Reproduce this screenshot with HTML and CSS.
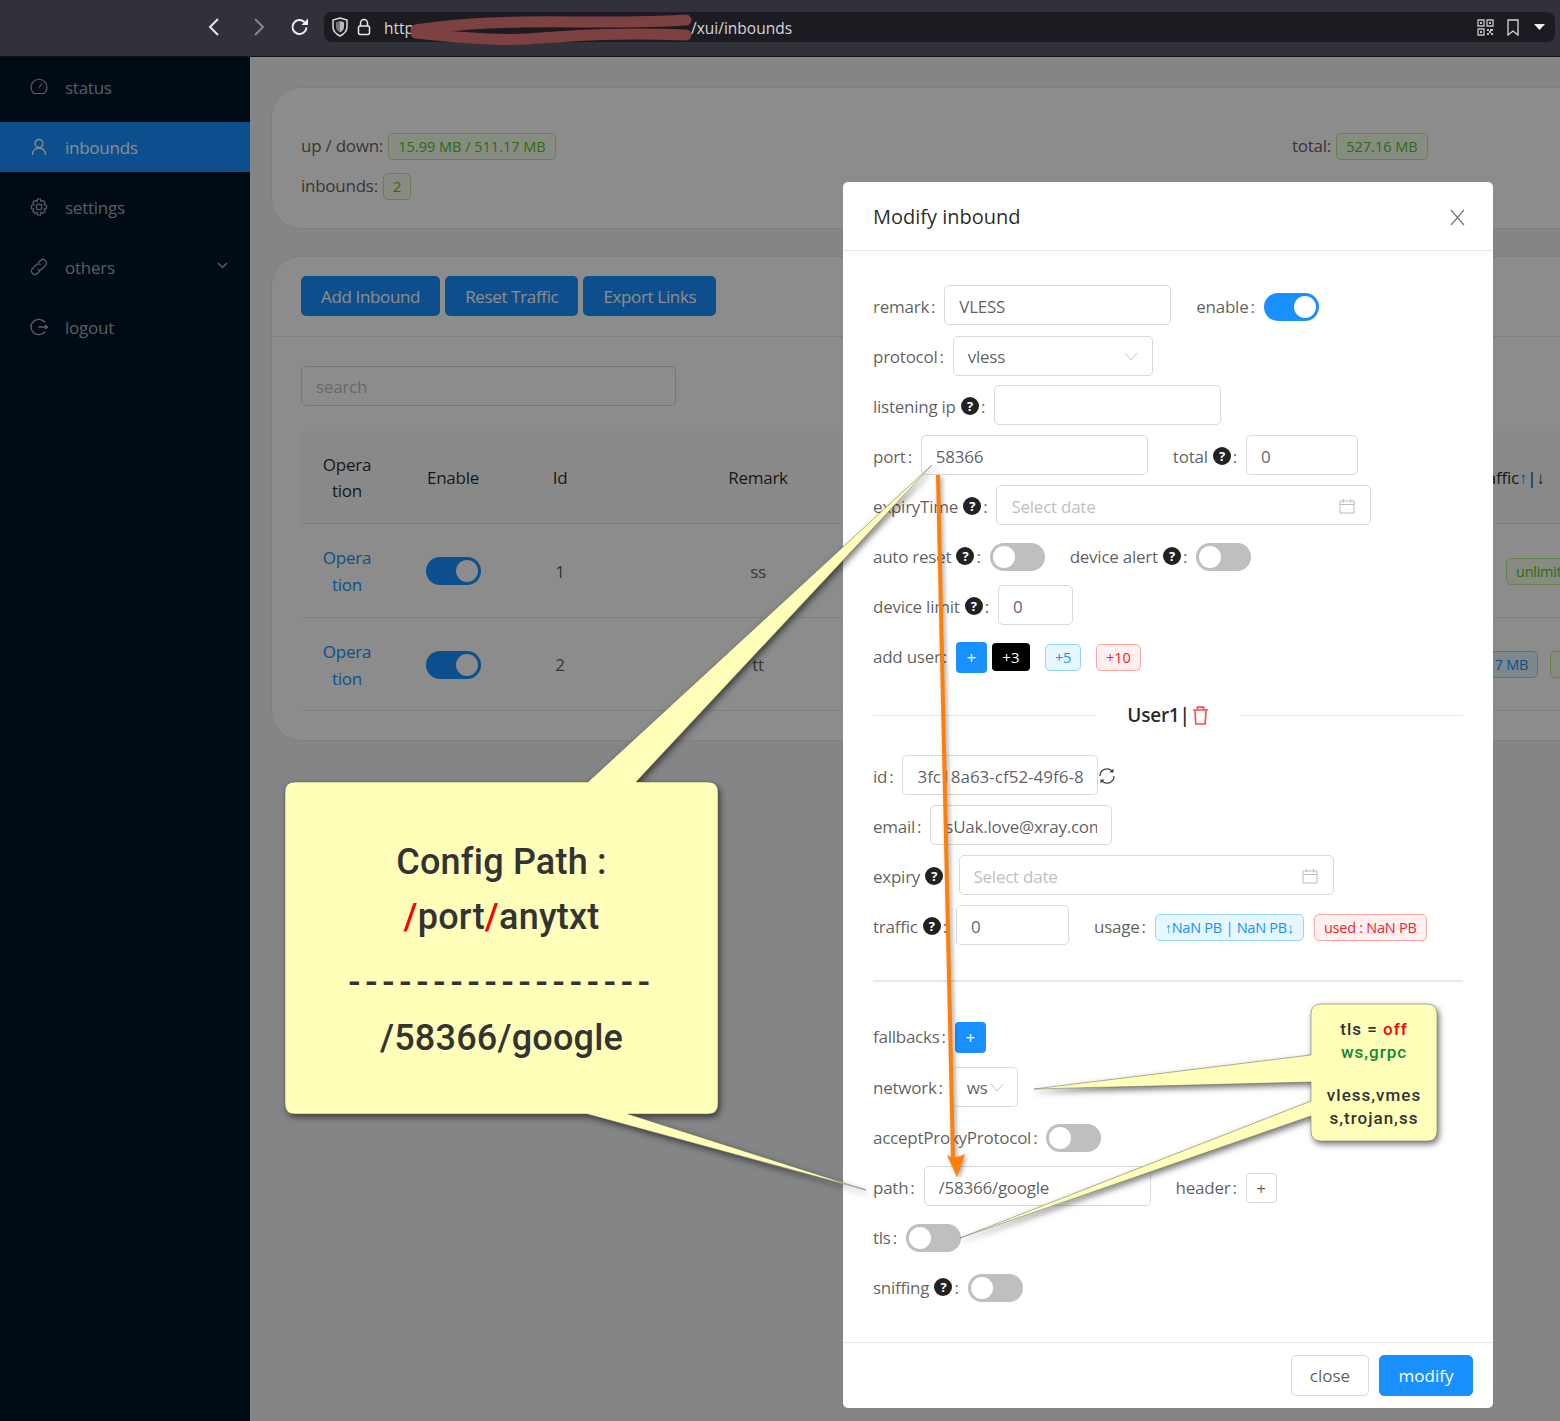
FILE: index.html
```html
<!DOCTYPE html>
<html lang="en">
<head>
  <meta charset="UTF-8" />
  <title>Modify inbound</title>
  <link rel="stylesheet" href="styles.css">
</head>
<body>

<svg class="defs" width="0" height="0">
  <symbol id="icoCal" viewBox="0 0 16 16"><path d="M1 3h14v12H1zM1 6.500h14M4.500 1v3.500M11.500 1v3.500" fill="none" stroke="#bdbdbd" stroke-width="1"/></symbol>
  <symbol id="icoDown" viewBox="0 0 16 10"><path d="M1 1l7 8 7-8" fill="none" stroke="#bfbfbf" stroke-width="1.100"/></symbol>
</svg>

<div class="browserbar">
  <svg class="nav-ico back" width="14" height="20" viewBox="0 0 14 20"><path d="M11 2L3 10l8 8" fill="none" stroke="#e8e8ea" stroke-width="2"/></svg>
  <svg class="nav-ico fwd" width="14" height="20" viewBox="0 0 14 20"><path d="M3 2l8 8-8 8" fill="none" stroke="#85858c" stroke-width="2"/></svg>
  <svg class="nav-ico reload" width="20" height="20" viewBox="0 0 20 20"><path d="M16.500 10.500a7 7 0 1 1-2.200-5.600" fill="none" stroke="#f0f0f2" stroke-width="2"/><path d="M18 1.500v6.600h-6.600z" fill="#f0f0f2"/></svg>
  <div class="urlbar">
    <svg width="16" height="20" viewBox="0 0 16 20"><path d="M8 1l7 2v7c0 4-3 7-7 9-4-2-7-5-7-9V3z" fill="none" stroke="#d8d8da" stroke-width="1.500"/><path d="M8 4l4 1.200V10c0 2.500-2 4.500-4 5.500z" fill="#b8b8bc"/><path d="M8 4L4 5.200V10c0 2.500 2 4.500 4 5.500z" fill="#77777c"/></svg>
    <svg class="lock" width="14" height="18" viewBox="0 0 14 18"><path d="M3.500 8V5a3.500 3.500 0 0 1 7 0v3" fill="none" stroke="#e8e8ea" stroke-width="1.500"/><rect x="1.500" y="8" width="11" height="8.500" rx="1.500" fill="none" stroke="#e8e8ea" stroke-width="1.500"/></svg>
    <span class="url-start">http</span>
    <span class="url-end">/xui/inbounds</span>
    <svg class="qr" width="17" height="17" viewBox="0 0 17 17"><path d="M1 1h6v6H1zM10 1h6v6h-6zM1 10h6v6H1z" fill="none" stroke="#c4c4c8" stroke-width="1.300"/><path d="M3 3h2v2H3zM12 3h2v2h-2zM3 12h2v2H3zM10 10h2v2h-2zM13 10h3v2h-3zM12 12h2v2h-2zM10 14h2v2h-2zM14 14h2v2h-2z" fill="#c4c4c8"/></svg>
    <svg class="mark" width="12" height="17" viewBox="0 0 12 17"><path d="M1 1h10v15l-5-4-5 4z" fill="none" stroke="#d8d8da" stroke-width="1.300"/></svg>
    <svg class="caret" width="11" height="6" viewBox="0 0 11 6"><path d="M0 0h11L5.500 6z" fill="#f0f0f2"/></svg>
  </div>
  <svg class="scribble" width="290" height="34" viewBox="0 0 290 34"><path d="M8 17C34 13 64 10 114 9S214 11 278 7M8 20C44 24 84 28 119 26S194 19 278 22" fill="none" stroke="#7e4141" stroke-width="11" stroke-linecap="round"/></svg>
</div>

<div class="layout">
  <aside class="sidebar">
    <a class="menu-item">
      <svg width="18" height="18" viewBox="0 0 18 18"><path d="M4 15.500a8 8 0 1 1 10 0zM9 9.500l3-4" fill="none" stroke="currentColor" stroke-width="1.200"/></svg>
      status
    </a>
    <a class="menu-item active">
      <svg width="18" height="18" viewBox="0 0 18 18"><circle cx="9" cy="5.500" r="4" fill="none" stroke="currentColor" stroke-width="1.400"/><path d="M2.500 17c0-4 2.500-7 6.500-7s6.500 3 6.500 7" fill="none" stroke="currentColor" stroke-width="1.400"/></svg>
      inbounds
    </a>
    <a class="menu-item">
      <svg width="18" height="18" viewBox="0 0 18 18"><path d="M7.500 1h3l.5 2.500 2-1 2.200 2.200-1.200 2 2.500.8v3l-2.500.6 1.200 2.200-2.200 2.200-2-1.200-.5 2.700h-3L7 14.300l-2 1.200-2.200-2.200 1.200-2.200L1.500 10.500v-3L4 6.700l-1.200-2L5 2.500l2 1z" fill="none" stroke="currentColor" stroke-width="1.200"/><circle cx="9" cy="9" r="2.800" fill="none" stroke="currentColor" stroke-width="1.200"/></svg>
      settings
    </a>
    <a class="menu-item">
      <svg width="18" height="18" viewBox="0 0 18 18"><path d="M8 5l2.500-2.500a3.300 3.300 0 0 1 5 5L12 11a3.300 3.300 0 0 1-4.500.2M10 13l-2.500 2.500a3.300 3.300 0 0 1-5-5L6 7a3.300 3.300 0 0 1 4.500-.2" fill="none" stroke="currentColor" stroke-width="1.200"/></svg>
      others
      <svg class="menu-arrow" width="11" height="7" viewBox="0 0 11 7"><path d="M1 1l4.500 4.500L10 1" fill="none" stroke="currentColor" stroke-width="1.500"/></svg>
    </a>
    <a class="menu-item">
      <svg width="18" height="18" viewBox="0 0 18 18"><path d="M15 4.500a7.700 7.700 0 1 0 0 9M8.500 9h9M15 7l2.500 2-2.500 2" fill="none" stroke="currentColor" stroke-width="1.300"/></svg>
      logout
    </a>
  </aside>

  <main class="content">
    <section class="card stats">
      <div class="stat">up / down: <span class="tag green">15.99 MB / 511.17 MB</span></div>
      <div class="stat">total: <span class="tag green">527.16 MB</span></div>
      <div class="stat">inbounds: <span class="tag green">2</span></div>
    </section>

    <section class="card list">
      <div class="list-head">
        <button class="btn">Add Inbound</button>
        <button class="btn">Reset Traffic</button>
        <button class="btn">Export Links</button>
      </div>
      <div class="list-body">
        <input class="search" type="text" placeholder="search" />
        <table>
          <colgroup>
            <col class="c-op"><col class="c-en"><col class="c-id"><col class="c-rem"><col class="c-gap"><col class="c-tr"><col class="c-last">
          </colgroup>
          <tr class="tr-head">
            <th class="op">Operation</th><th>Enable</th><th>Id</th><th>Remark</th><th></th><th class="th-traffic">Traffic<span class="up">↑</span>|↓</th><th></th>
          </tr>
          <tr class="tr-one">
            <td class="op link">Operation</td><td><span class="sw on dim"></span></td><td>1</td><td>ss</td><td></td><td colspan="2" class="unl"><span class="tag green">unlimited</span></td>
          </tr>
          <tr class="tr-two">
            <td class="op link">Operation</td><td><span class="sw on dim"></span></td><td>2</td><td>tt</td><td></td><td class="tr-used"><span class="tag blue">511.17 MB</span></td><td class="tr-rest"><span class="tag green">unlimited</span></td>
          </tr>
        </table>
      </div>
    </section>
  </main>
</div>

<div class="mask"></div>

<div class="modal">
  <div class="modal-head">
    <span>Modify inbound</span>
    <svg width="15" height="17" viewBox="0 0 15 17"><path d="M1 1l13 15M14 1L1 16" stroke="#777" stroke-width="1.200"/></svg>
  </div>
  <div class="modal-body">
    <div class="row">
      <label>remark<i>:</i></label><input class="field w227" value="VLESS"/>
      <label class="next">enable<i>:</i></label><span class="sw on"></span>
    </div>
    <div class="row">
      <label>protocol<i>:</i></label>
      <div class="field select w200">vless<svg width="14" height="9"><use href="#icoDown"/></svg></div>
    </div>
    <div class="row">
      <label>listening ip <b class="help">?</b><i>:</i></label><input class="field w227"/>
    </div>
    <div class="row">
      <label>port<i>:</i></label><input class="field w227" value="58366"/>
      <label class="next">total <b class="help">?</b><i>:</i></label><input class="field w112" value="0"/>
    </div>
    <div class="row">
      <label>expiryTime <b class="help">?</b><i>:</i></label>
      <div class="field date w375">Select date<svg width="16" height="16"><use href="#icoCal"/></svg></div>
    </div>
    <div class="row">
      <label>auto reset <b class="help">?</b><i>:</i></label><span class="sw"></span>
      <label class="next">device alert <b class="help">?</b><i>:</i></label><span class="sw"></span>
    </div>
    <div class="row">
      <label>device limit <b class="help">?</b><i>:</i></label><input class="field w75" value="0"/>
    </div>
    <div class="row">
      <label>add user<i>:</i></label>
      <button class="mini">+</button>
      <button class="mini black">+3</button>
      <span class="tag blue t5">+5</span>
      <span class="tag red t10">+10</span>
    </div>

    <div class="divider">
      <span class="divider-text">User1|
        <svg width="17" height="19" viewBox="0 0 17 19"><path d="M1 4h15M5.500 4V1.200h6V4M3 4l.8 14h9.400L14 4" fill="none" stroke="#ff4d4f" stroke-width="1.700"/></svg>
      </span>
    </div>

    <div class="row">
      <label>id<i>:</i></label><input class="field w196" value="3fc18a63-cf52-49f6-8"/>
      <svg class="sync" width="18" height="18" viewBox="0 0 18 18"><path d="M2 9a7 7 0 0 1 12-5M16 9a7 7 0 0 1-12 5" fill="none" stroke="#444" stroke-width="1.300"/><path d="M15.500 1.500v4h-4zM2.500 16.500v-4h4z" fill="#444"/></svg>
    </div>
    <div class="row">
      <label>email<i>:</i></label><input class="field w182" value="sUak.love@xray.com"/>
    </div>
    <div class="row">
      <label>expiry <b class="help">?</b><i>:</i></label>
      <div class="field date w375">Select date<svg width="16" height="16"><use href="#icoCal"/></svg></div>
    </div>
    <div class="row">
      <label>traffic <b class="help">?</b><i>:</i></label><input class="field w113" value="0"/>
      <label class="next">usage<i>:</i></label>
      <span class="tag blue t-use">↑NaN PB | NaN PB↓</span>
      <span class="tag red t-used">used : NaN PB</span>
    </div>

    <div class="rule"></div>

    <div class="row tall">
      <label>fallbacks<i>:</i></label><button class="mini">+</button>
    </div>
    <div class="row">
      <label>network<i>:</i></label>
      <div class="field select w66">ws<svg width="14" height="9"><use href="#icoDown"/></svg></div>
    </div>
    <div class="row">
      <label>acceptProxyProtocol<i>:</i></label><span class="sw"></span>
    </div>
    <div class="row">
      <label>path<i>:</i></label><input class="field w227" value="/58366/google"/>
      <label class="next">header<i>:</i></label><button class="plus">+</button>
    </div>
    <div class="row">
      <label>tls<i>:</i></label><span class="sw"></span>
    </div>
    <div class="row">
      <label>sniffing <b class="help">?</b><i>:</i></label><span class="sw"></span>
    </div>
  </div>
  <div class="modal-foot">
    <button class="btn-close">close</button>
    <button class="btn-ok">modify</button>
  </div>
</div>

<!-- annotations drawn on top of the screenshot -->
<svg class="notes" width="1560" height="1421" viewBox="0 0 1560 1421">
  <path class="bubble" d="M295 782H588L932 465 636 782H708Q718 782 718 792V1104Q718 1114 708 1114H628L866 1190 587 1114H295Q285 1114 285 1104V792Q285 782 295 782Z"/>
  <path class="bubble" d="M1321 1004H1427Q1437 1004 1437 1014V1131Q1437 1141 1427 1141H1321Q1311 1141 1311 1131V1116L960 1238 1311 1101V1082L1034 1089 1311 1055V1014Q1311 1004 1321 1004Z"/>
  <g class="arrow">
    <path d="M938 475L953 1158" fill="none" stroke="#ff7f0a" stroke-width="4"/>
    <path d="M947 1155L957 1177 965 1154Q955 1160 947 1155Z" fill="#ff7f0a"/>
  </g>
</svg>

<div class="note big">
  <p>Config Path :</p>
  <p><em>/</em>port<em>/</em>anytxt</p>
  <p class="dashes">------------------</p>
  <p>/58366/google</p>
</div>

<div class="note small">
  <p>tls = <em>off</em></p>
  <p class="ok">ws,grpc</p>
  <p class="blank">&nbsp;</p>
  <p>vless,vmes</p>
  <p>s,trojan,ss</p>
</div>

</body>
</html>
```

FILE: styles.css
```css
* {
  box-sizing: border-box;
}
html, body {
  margin: 0;
  height: 1421px;
  overflow: hidden;
}
body {
  position: relative;
  font-family: "Open Sans", "Noto Sans", sans-serif;
  font-size: 17px;
  letter-spacing: -0.25px;
  color: rgba(0,0,0,0.65);
  background: #f0f2f5;
}
.defs {
  position: absolute;
}

/* browser chrome */
.browserbar {
  position: relative;
  display: flex;
  align-items: center;
  height: 57px;
  padding: 0 5px 2px 207px;
  background: #31313a;
  border-bottom: 1px solid #111114;
}
.nav-ico {
  flex: none;
}
.fwd {
  margin-left: 31px;
}
.reload {
  margin-left: 24px;
}
.urlbar {
  display: flex;
  align-items: center;
  flex: 1;
  height: 30px;
  margin-left: 14px;
  padding: 0 9px 0 8px;
  background: #1c1b22;
  border-radius: 8px;
  color: #d6d6da;
  font-size: 15.5px;
  letter-spacing: 0;
}
.urlbar span {
  padding-top: 2px;
}
.lock {
  margin-left: 9px;
}
.url-start {
  margin-left: 13px;
}
.url-end {
  margin-left: 277px;
}
.qr {
  margin-left: auto;
}
.mark {
  margin-left: 13px;
}
.caret {
  margin-left: 15px;
  margin-right: 1px;
}
.scribble {
  position: absolute;
  left: 408px;
  top: 13px;
}

/* page */
.layout {
  display: flex;
  height: 1364px;
}
.sidebar {
  flex: none;
  width: 250px;
  padding-top: 5px;
  background: #001529;
}
.menu-item {
  display: flex;
  align-items: center;
  gap: 17px;
  height: 50px;
  margin-bottom: 10px;
  padding-left: 30px;
  color: rgba(255,255,255,0.65);
}
.menu-item.active {
  background: #1890ff;
  color: #fff;
}
.menu-arrow {
  margin-left: 85px;
  margin-bottom: 3px;
}
.content {
  flex: 1;
  min-width: 0;
  padding: 30px 0 0 21px;
  overflow: hidden;
}
.card {
  width: 1400px;
  background: #fff;
  border: 1px solid #e8e8e8;
  border-radius: 30px;
}
.stats {
  display: grid;
  grid-template-columns: 991px 1fr;
  grid-auto-rows: 40px;
  align-items: center;
  height: 142px;
  padding: 38px 29px 0;
}
.stats .tag {
  letter-spacing: 0;
}
.list {
  margin-top: 27px;
  height: 485px;
}
.list-head {
  display: flex;
  gap: 5px;
  height: 80px;
  padding: 19px 29px;
  border-bottom: 1px solid #e8e8e8;
}
.btn {
  height: 40px;
  padding: 0 20px;
  border: 0;
  border-radius: 5px;
  background: #1890ff;
  color: #fff;
  font: inherit;
  letter-spacing: -0.35px;
}
.list-body {
  padding: 29px 29px 0;
}
.search {
  display: block;
  width: 375px;
  height: 40px;
  padding: 0 14px;
  border: 1px solid #d9d9d9;
  border-radius: 5px;
  font: inherit;
  letter-spacing: inherit;
}
.search::placeholder, .date {
  color: #bfbfbf;
}
table {
  table-layout: fixed;
  width: 1369px;
  margin-top: 25px;
  border-collapse: collapse;
}
.c-op { width: 92px; }
.c-en { width: 120px; }
.c-id { width: 94px; }
.c-rem { width: 302px; }
.c-gap { width: 535px; }
.c-tr { width: 100px; }
th, td {
  padding: 2px 5px 0;
  text-align: center;
  border-bottom: 1px solid #e8e8e8;
  white-space: nowrap;
}
th {
  background: #fafafa;
  color: rgba(0,0,0,0.85);
  font-weight: 500;
}
th.th-traffic {
  padding-left: 27px;
  padding-right: 0;
  overflow: visible;
}
.tr-head { height: 92px; }
.tr-one { height: 94px; }
.tr-two { height: 93px; }
th.op, td.op {
  padding: 2px 20px 0;
  line-height: 26px;
  white-space: normal;
  word-break: break-all;
}
td.op {
  line-height: 27px;
}
.link {
  color: #1890ff;
}
.up {
  color: #1890ff;
}
td.unl {
  padding-left: 61px;
  text-align: left;
}
td.tr-used {
  padding-right: 10px;
  text-align: right;
}
td.tr-rest {
  padding-left: 5px;
  text-align: left;
}

/* tags and switches */
.tag {
  display: inline-block;
  height: 27px;
  padding: 0 9px;
  border: 1px solid;
  border-radius: 5px;
  font-size: 14.5px;
  line-height: 25px;
}
.green {
  margin-left: 1px;
  background: #f6ffed;
  border-color: #b7eb8f;
  color: #52c41a;
}
.blue {
  background: #e6f7ff;
  border-color: #91d5ff;
  color: #1890ff;
}
.red {
  background: #fff1f0;
  border-color: #ffa39e;
  color: #f5222d;
}
.sw {
  position: relative;
  display: inline-block;
  flex: none;
  width: 55px;
  height: 28px;
  border-radius: 14px;
  background: #bfbfbf;
}
.sw::after {
  content: "";
  position: absolute;
  top: 3px;
  left: 3px;
  width: 22px;
  height: 22px;
  border-radius: 50%;
  background: #fff;
}
.sw.on {
  background: #1890ff;
}
.sw.on::after {
  left: 30px;
}
.sw.dim {
  vertical-align: middle;
}

.mask {
  position: absolute;
  inset: 57px 0 0 0;
  background: rgba(0,0,0,0.45);
}

/* modal */
.modal {
  position: absolute;
  left: 843px;
  top: 182px;
  width: 650px;
  background: #fff;
  border-radius: 5px;
}
.modal-head {
  display: flex;
  align-items: center;
  justify-content: space-between;
  height: 69px;
  padding: 0 28px 0 30px;
  border-bottom: 1px solid #e8e8e8;
  color: rgba(0,0,0,0.85);
  font-size: 20px;
  font-weight: 500;
  letter-spacing: 0;
}
.modal-head svg {
  margin-top: 2px;
}
.modal-body {
  padding: 31px 30px 29px;
}
.row {
  display: flex;
  align-items: center;
  height: 50px;
}
.row.tall {
  height: 51px;
}
.row label {
  display: flex;
  align-items: center;
  flex: none;
  margin-right: 9px;
  padding-bottom: 2px;
  white-space: pre;
}
.row label i {
  margin: 0 0 0 2px;
  font-style: normal;
}
.row label.next {
  margin-left: 25px;
}
.help {
  display: inline-block;
  width: 18px;
  height: 18px;
  margin-left: 1px;
  border-radius: 50%;
  background: #222;
  color: #fff;
  font-size: 13px;
  line-height: 18px;
  text-align: center;
}
.field {
  display: flex;
  align-items: center;
  justify-content: space-between;
  flex: none;
  height: 40px;
  margin-top: -4px;
  padding: 2px 14px 0;
  border: 1px solid #d9d9d9;
  border-radius: 5px;
  background: #fff;
  color: rgba(0,0,0,0.65);
  font: inherit;
  letter-spacing: inherit;
}
.field.date {
  color: #bfbfbf;
  padding-right: 15px;
}
.field.select {
  margin-top: -2px;
  padding-top: 0;
}
.w66 { width: 66px; padding-right: 13px; }
.w75 { width: 75px; }
.w112 { width: 112px; }
.w113 { width: 113px; }
.w182 { width: 182px; }
.w196 { width: 196px; letter-spacing: 0; }
.w200 { width: 200px; }
.w227 { width: 227px; }
.w375 { width: 375px; }
.mini {
  width: 31px;
  height: 31px;
  padding: 0;
  border: 0;
  border-radius: 4px;
  background: #1890ff;
  color: #fff;
  font: inherit;
}
.mini.black {
  width: 38px;
  height: 28px;
  margin-left: 5px;
  background: #000;
  font-size: 15px;
}
.t5 {
  margin-left: 15px;
}
.t10 {
  margin-left: 15px;
  letter-spacing: 0;
}
.t-used {
  margin-left: 10px;
}
.sync {
  flex: none;
  margin-top: -2px;
}
.divider {
  display: flex;
  align-items: center;
  gap: 30px;
  height: 70px;
  padding-bottom: 4px;
  color: rgba(0,0,0,0.85);
  font-size: 19px;
  font-weight: 600;
}
.divider::before, .divider::after {
  content: "";
  flex: 1;
  height: 1px;
  background: #e8e8e8;
}
.divider-text {
  display: flex;
  align-items: center;
  gap: 2px;
}
.rule {
  height: 2px;
  margin: 28px 0 30px;
  background: #e8e8e8;
}
.plus {
  width: 31px;
  height: 30px;
  padding: 0;
  border: 1px solid #d9d9d9;
  border-radius: 4px;
  background: #fff;
  color: rgba(0,0,0,0.65);
  font: inherit;
}
.modal-foot {
  display: flex;
  justify-content: flex-end;
  gap: 10px;
  height: 66px;
  padding: 12px 20px;
  border-top: 1px solid #e8e8e8;
}
.btn-close, .btn-ok {
  height: 41px;
  border: 1px solid #d9d9d9;
  border-radius: 5px;
  background: #fff;
  color: rgba(0,0,0,0.65);
  font: inherit;
}
.btn-close {
  width: 78px;
}
.btn-ok {
  width: 94px;
  border-color: #1890ff;
  background: #1890ff;
  color: #fff;
}

/* annotations */
.notes {
  position: absolute;
  left: 0;
  top: 0;
  pointer-events: none;
}
.bubble {
  fill: #ffffb9;
  stroke: #66665a;
  stroke-width: 0.5;
  filter: drop-shadow(2px 3px 3px rgba(0,0,0,0.55));
}
.arrow {
  filter: drop-shadow(2px 2px 2px rgba(0,0,0,0.35));
}
.note {
  position: absolute;
  color: #333;
  font-family: Roboto, "Open Sans", sans-serif;
  font-weight: 500;
  text-align: center;
}
.note p {
  margin: 0;
}
.note em {
  color: #f00;
  font-style: normal;
}
.big {
  left: 285px;
  top: 835px;
  width: 433px;
  font-size: 36px;
  line-height: 55px;
  letter-spacing: 0.2px;
}
.big .dashes {
  margin-top: 11px;
  letter-spacing: 4.800px;
}
.small {
  left: 1311px;
  top: 1018px;
  width: 126px;
  font-size: 17px;
  line-height: 23px;
  letter-spacing: 1px;
}
.small .blank {
  line-height: 20px;
}
.small .ok {
  color: #0a8a3a;
}
```
